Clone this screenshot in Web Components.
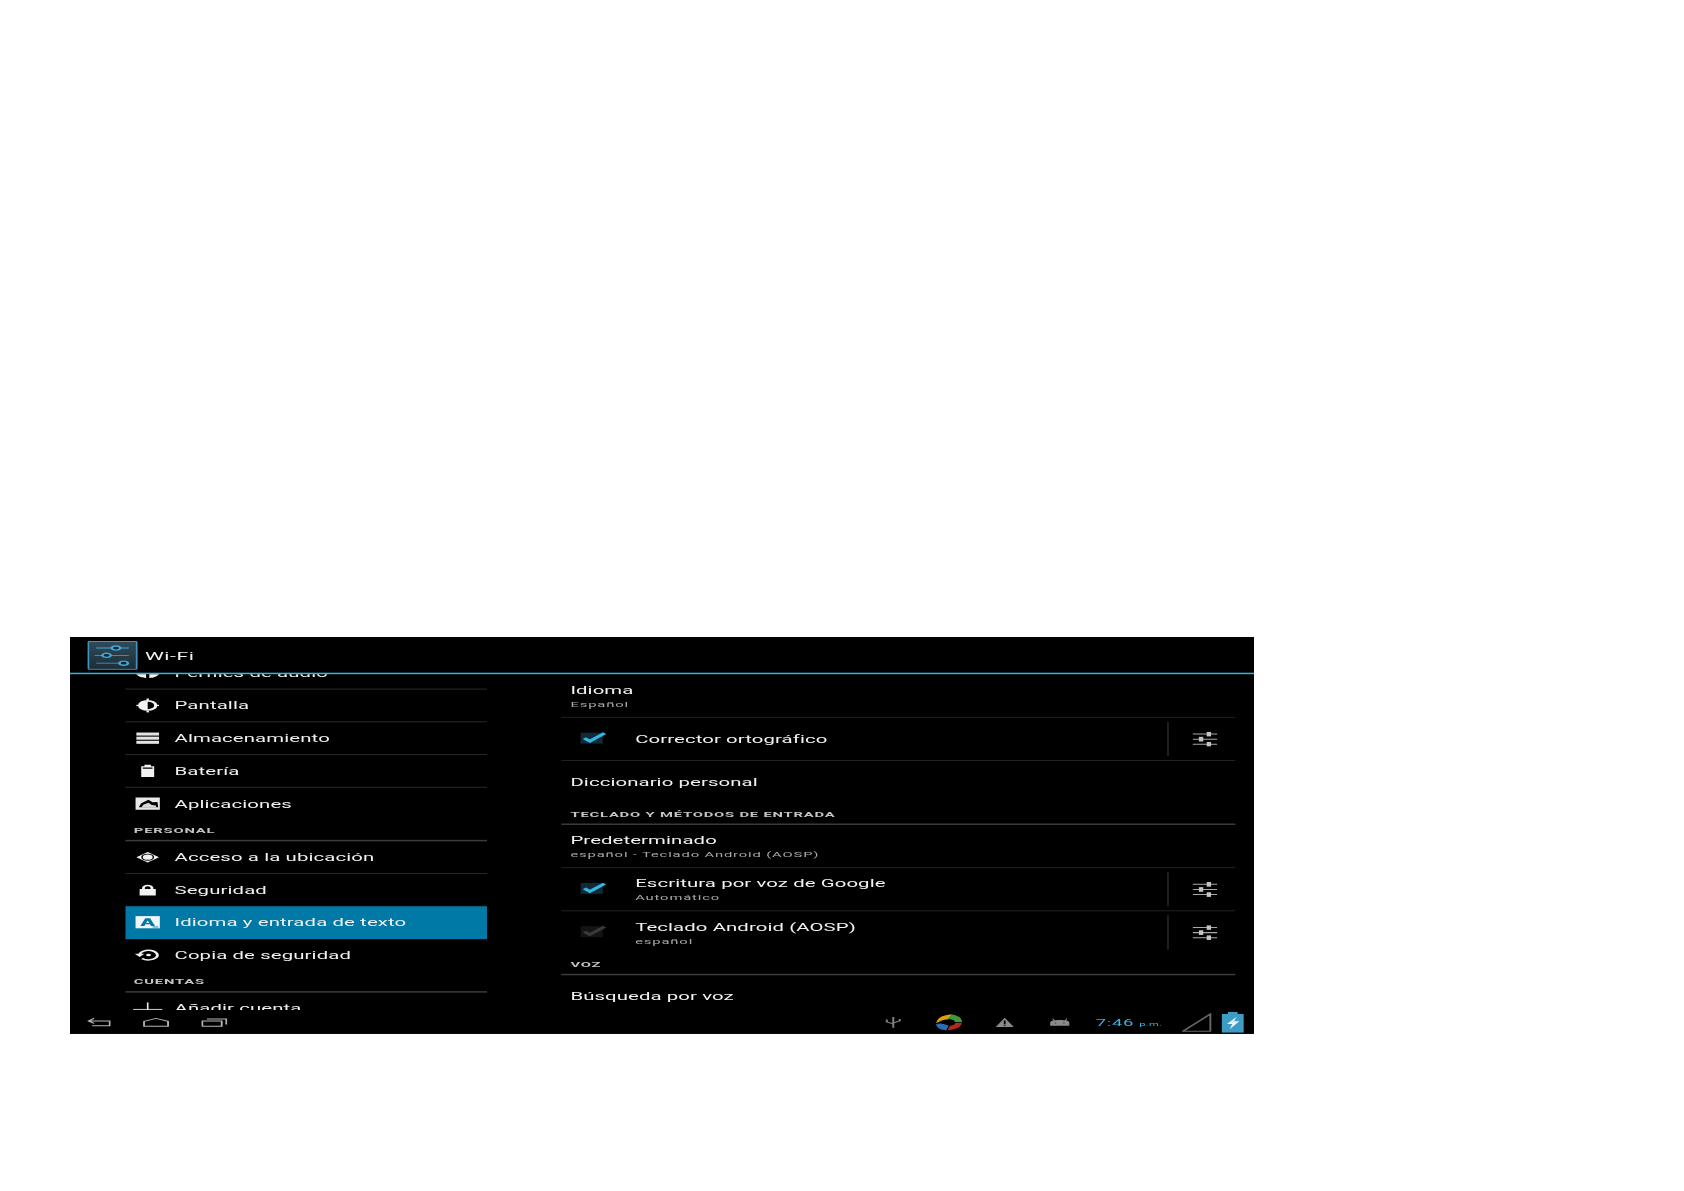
<!DOCTYPE html>
<html>
<head>
<meta charset="utf-8">
<title>Ajustes</title>
<style>
  html, body { margin: 0; background: #fff; }
  body { padding: 637px 0 0 70px; height: 554px; overflow: hidden; font-family: Roboto, "Liberation Sans", sans-serif; }
</style>
</head>
<body>
<tablet-screen>
  <action-bar slot="bar" label="Wi-Fi"></action-bar>

  <settings-list slot="left">
    <menu-row icon="audio" label="Perfiles de audio"></menu-row>
    <menu-row icon="display" label="Pantalla"></menu-row>
    <menu-row icon="storage" label="Almacenamiento"></menu-row>
    <menu-row icon="battery" label="Batería"></menu-row>
    <menu-row icon="apps" label="Aplicaciones" last></menu-row>
    <section-head label="PERSONAL" indent="9"></section-head>
    <menu-row icon="location" label="Acceso a la ubicación"></menu-row>
    <menu-row icon="lock" label="Seguridad"></menu-row>
    <menu-row icon="lang" label="Idioma y entrada de texto" selected></menu-row>
    <menu-row icon="backup" label="Copia de seguridad" last></menu-row>
    <section-head label="CUENTAS" indent="9"></section-head>
    <menu-row icon="plus" label="Añadir cuenta" last></menu-row>
  </settings-list>

  <pref-list slot="right">
    <pref-row label="Idioma" summary="Español"></pref-row>
    <pref-row label="Corrector ortográfico" check="on" tune></pref-row>
    <pref-row label="Diccionario personal" last></pref-row>
    <section-head label="TECLADO Y MÉTODOS DE ENTRADA" indent="10"></section-head>
    <pref-row label="Predeterminado" summary="español - Teclado Android (AOSP)"></pref-row>
    <pref-row label="Escritura por voz de Google" summary="Automático" check="on" tune></pref-row>
    <pref-row label="Teclado Android (AOSP)" summary="español" check="off" tune last></pref-row>
    <section-head label="VOZ" indent="10"></section-head>
    <pref-row label="Búsqueda por voz" last></pref-row>
  </pref-list>

  <status-bar slot="status"></status-bar>
</tablet-screen>

<script>
const ICONS = {
  audio: '<path fill="#f2f2f2" d="M14 0v28C7 28 1 22 1 14S7 0 14 0zM18 0c7 0 13 6 13 14s-6 14-13 14z"/>',
  display: '<g fill="#f2f2f2"><path d="M16 3.500a12 12.500 0 1 0 0 25 12 12.500 0 1 0 0-25zm0 4a8 8.500 0 0 1 0 17z" fill-rule="evenodd"/><rect x="14.500" y="0" width="3" height="4"/><rect x="14.500" y="28" width="3" height="4"/><rect x="2" y="14.500" width="3" height="3"/><rect x="27" y="14.500" width="3" height="3"/></g>',
  storage: '<g fill="#e4e4e4"><rect x="2" y="3" width="28" height="7"/><rect x="2" y="12.500" width="28" height="7"/><rect x="2" y="22" width="28" height="7"/></g>',
  battery: '<path fill="#f2f2f2" d="M12 2h8v3h4v25H8V5h4zM10 8v3h12V8z" fill-rule="evenodd"/>',
  apps: '<path fill="#e8e8e8" fill-rule="evenodd" d="M1 2h30v28H1zM5 24l3-9 9-8 5 6 6-1 1 12z"/><path fill="#d8d8d8" d="M8 25l3-7 6-4 4 5 5 1 1 5z"/>',
  location: '<g fill="#f2f2f2"><path fill-rule="evenodd" d="M16 4 30 16 16 28 2 16zm0 4a8 8 0 1 0 0 16 8 8 0 1 0 0-16z"/><circle cx="16" cy="16" r="6"/></g>',
  lock: '<path fill="#f2f2f2" fill-rule="evenodd" d="M6 14h3v-3a7 7 0 0 1 14 0v3h3v15H6zM12.500 14h7v-3a3.500 3.500 0 0 0-7 0z"/>',
  lang: '<rect x="1" y="2" width="30" height="28" fill="#eef6fa"/><path fill="#0079a6" fill-rule="evenodd" d="M13 7h6l6 18h-5l-1-4h-6l-1 4H7zm3 5-2 6h4z"/><rect x="22" y="26" width="7" height="2" fill="#0079a6"/>',
  backup: '<g fill="none" stroke="#f2f2f2" stroke-width="3.400"><path d="M6 16a11 11 0 1 1 3 8"/></g><path fill="#f2f2f2" d="M0 13h12L6 21z"/><circle cx="17" cy="16" r="3" fill="#f2f2f2"/>',
  plus: '<rect x="-2" y="17" width="36" height="2" fill="#eee"/><rect x="15" y="2" width="2" height="30" fill="#eee"/>'
};

class TabletScreen extends HTMLElement {
  constructor() {
    super();
    this.attachShadow({mode: 'open'}).innerHTML = `
      <style>
        :host { display: block; width: 1184px; height: 397px; overflow: hidden; }
        .screen {
          width: 1280px; height: 800px; background: #000; color: #f0f0f0;
          display: flex; flex-direction: column;
          transform: scale(.925, .496); transform-origin: 0 0;
          filter: blur(.55px);
        }
        .panes { flex: 1; min-height: 0; display: grid; grid-template-columns: 531px 729px; }
        .left { padding-left: 60px; overflow: hidden; width: 391px; }
        .right { overflow: hidden; padding-top: 1px; }
      </style>
      <div class="screen">
        <slot name="bar"></slot>
        <div class="panes">
          <div class="left"><slot name="left"></slot></div>
          <div class="right"><slot name="right"></slot></div>
        </div>
        <slot name="status"></slot>
      </div>`;
  }
}

class ActionBar extends HTMLElement {
  constructor() {
    super();
    this.attachShadow({mode: 'open'}).innerHTML = `
      <style>
        :host { display: flex; align-items: center; height: 75px; box-sizing: border-box; border-bottom: 3px solid #33b5e5; padding-left: 19px; gap: 8px; font-size: 23px; letter-spacing: .6px; }
        .logo { width: 54px; height: 58px; margin-top: 2px; box-sizing: border-box; border: 2px solid #3f93c0; border-radius: 2px; background: linear-gradient(#2f4a5a, #1f2d36); display: block; }
        span { padding-top: 4px; }
      </style>
      <svg class="logo" viewBox="0 0 54 58">
        <g stroke="#3fa9d8" stroke-width="2" fill="none">
          <path d="M8 13H46M6 29H46M8 46H46"/>
          <ellipse cx="31" cy="13" rx="5" ry="4.500" fill="#14242e" stroke-width="3"/>
          <ellipse cx="20" cy="29" rx="5" ry="4.500" fill="#14242e" stroke-width="3"/>
          <ellipse cx="40" cy="46" rx="5" ry="4.500" fill="#14242e" stroke-width="3"/>
        </g>
      </svg>
      <span>${this.getAttribute('label')}</span>`;
  }
}

class SettingsList extends HTMLElement {
  constructor() {
    super();
    this.attachShadow({mode: 'open'}).innerHTML = `
      <style>
        :host { display: block; margin-top: -35px; }
      </style>
      <slot></slot>`;
  }
}

class PrefList extends HTMLElement {
  constructor() {
    super();
    this.attachShadow({mode: 'open'}).innerHTML = `
      <style>
        :host { display: block; }
      </style>
      <slot></slot>`;
  }
}

class MenuRow extends HTMLElement {
  constructor() {
    super();
    const icon = ICONS[this.getAttribute('icon')] || '';
    this.attachShadow({mode: 'open'}).innerHTML = `
      <style>
        :host { display: flex; align-items: center; height: 66px; box-sizing: border-box; border-bottom: 2px solid #2a2a2a; font-size: 22px; letter-spacing: .12px; white-space: nowrap; }
        :host([last]) { border-bottom-color: transparent; }
        :host([selected]) { background: #0079a6; border-bottom-color: #0079a6; margin-top: -1px; }
        svg { width: 28px; height: 28px; margin-left: 10px; margin-right: 15px; flex: none; overflow: visible; }
        span { padding-top: 1px; }
      </style>
      <svg viewBox="0 0 32 32">${icon}</svg>
      <span>${this.getAttribute('label')}</span>`;
  }
}

class SectionHead extends HTMLElement {
  constructor() {
    super();
    this.attachShadow({mode: 'open'}).innerHTML = `
      <style>
        :host { display: flex; align-items: flex-end; height: 42px; box-sizing: border-box; border-bottom: 3px solid #3c3c3c; padding: 0 0 10px ${this.getAttribute('indent')}px; font-size: 16px; font-weight: 700; letter-spacing: .85px; color: #c4c4c4; white-space: nowrap; }
      </style>
      <span>${this.getAttribute('label')}</span>`;
  }
}

class PrefRow extends HTMLElement {
  constructor() {
    super();
    const check = this.getAttribute('check');
    const summary = this.getAttribute('summary');
    const box = check ? `
      <svg class="check ${check}" viewBox="0 0 32 32">
        <rect x="3" y="8" width="24" height="22" fill="${check === 'on' ? '#102a38' : '#141414'}"/>
        <path d="M7 19l6 6L29 9" fill="none" stroke="${check === 'on' ? '#33b5e5' : '#3a3a3a'}" stroke-width="5"/>
      </svg>` : '';
    const tune = this.hasAttribute('tune') ? `
      <div class="tune">
        <svg viewBox="0 0 32 32">
          <g stroke="#a8a8a8" stroke-width="2.200" fill="none">
            <path d="M2 5H30M2 16H30M2 27H30"/>
          </g>
          <g fill="#c4c4c4">
            <rect x="18" y="0" width="5" height="10"/>
            <rect x="9" y="11" width="5" height="10"/>
            <rect x="18" y="22" width="5" height="10"/>
          </g>
        </svg>
      </div>` : '';
    this.attachShadow({mode: 'open'}).innerHTML = `
      <style>
        :host { display: flex; align-items: center; height: 87px; box-sizing: border-box; border-bottom: 2px solid #222; white-space: nowrap; }
        :host([last]) { border-bottom-color: transparent; }
        .check { width: 32px; height: 32px; margin: 0 30px 10px 18px; flex: none; }
        .text { flex: 1; padding-left: ${check ? 0 : 10}px; padding-top: ${summary ? 4 : 0}px; }
        .title { font-size: 22px; line-height: 27px; letter-spacing: .1px; color: #f2f2f2; }
        .sub { font-size: 16px; line-height: 24px; margin-top: 3px; letter-spacing: .9px; color: #a8a8a8; }
        .tune { align-self: stretch; margin: 8px 0; width: 74px; border-left: 2px solid #222; display: flex; align-items: center; justify-content: center; box-sizing: border-box; padding-left: 6px; }
        .tune svg { width: 30px; height: 30px; }
      </style>
      ${box}
      <div class="text">
        <div class="title">${this.getAttribute('label')}</div>
        ${summary ? `<div class="sub">${summary}</div>` : ''}
      </div>
      ${tune}`;
  }
}

class StatusBar extends HTMLElement {
  constructor() {
    super();
    this.attachShadow({mode: 'open'}).innerHTML = `
      <style>
        :host { display: flex; align-items: center; height: 48px; padding: 0 11px 0 18px; color: #33b5e5; background: #000; }
        svg { display: block; flex: none; }
        .nav { display: flex; align-items: center; gap: 35px; margin-top: 2px; }
        .tray { margin-left: auto; margin-top: 2px; display: flex; align-items: center; }
        .clock { font-size: 20px; letter-spacing: .7px; white-space: nowrap; width: 93px; margin-left: 28px; }
        .clock small { font-size: 12px; letter-spacing: .3px; }
      </style>
      <div class="nav">
        <svg width="26" height="20" viewBox="0 0 26 20" fill="none" stroke="#b5b5b5" stroke-width="2"><path d="M8 2 2 7 8 12M2 7H25V17H6"/></svg>
        <svg width="28" height="20" viewBox="0 0 28 20" fill="none" stroke="#b5b5b5" stroke-width="2"><path d="M1 8 14 2 27 8V18H1z"/></svg>
        <svg width="28" height="20" viewBox="0 0 28 20" fill="none" stroke="#b5b5b5" stroke-width="2"><path d="M1 7H22V18H1zM6 3H27V14"/></svg>
      </div>
      <div class="tray">
        <svg width="18" height="24" viewBox="0 0 18 24"><g fill="none" stroke="#808080" stroke-width="2.200"><path d="M9 1V23M2 6v5l7 4M16 5v4l-7 4"/></g></svg>
        <svg width="30" height="34" viewBox="0 0 44 40" preserveAspectRatio="none" style="margin-left:36px"><path fill="#d8a013" d="M2 22C4 8 14 1 28 1L20 13C13 13 9 16 2 22z"/><path fill="#3f9a3c" d="M28 1C37 3 43 10 43 19L32 19C31 15 27 12 20 13z"/><path fill="#b5281f" d="M43 21C42 31 32 38 20 39L24 28C30 27 33 24 32 21z"/><path fill="#2a6db3" d="M2 24C9 20 16 24 22 28L18 39C9 38 2 33 2 24z"/></svg>
        <svg width="21" height="20" viewBox="0 0 32 26" preserveAspectRatio="none" style="margin-left:35px"><path fill-rule="evenodd" fill="#8a8a8a" d="M16 1 31 25H1zM14.500 8v9h3V8zM14.500 19v3h3v-3z"/></svg>
        <svg width="22" height="18" viewBox="0 0 34 26" preserveAspectRatio="none" style="margin-left:38px"><path fill="#8a8a8a" d="M1 23V14C1 8 7 6 17 6S33 8 33 14V23z"/><path stroke="#8a8a8a" stroke-width="2" d="M8 8 5 2M26 8l3-6"/><circle cx="10" cy="15" r="1.500" fill="#333"/><circle cx="24" cy="15" r="1.500" fill="#333"/></svg>
        <span class="clock">7:46 <small>p.m.</small></span>
        <svg width="32" height="38" viewBox="0 0 32 38"><path d="M1 37 31 2V37z" fill="none" stroke="#666" stroke-width="2.500"/></svg>
        <svg width="24" height="42" viewBox="0 0 25 40" preserveAspectRatio="none" style="margin-left:11px"><path fill="#3e9cc4" d="M7 0h11v4h7v36H0V4h7z"/><path fill="#e4f3f9" d="M17 9 6 23h6l-3 10 11-15h-6z"/></svg>
      </div>`;
  }
}

customElements.define('tablet-screen', TabletScreen);
customElements.define('action-bar', ActionBar);
customElements.define('settings-list', SettingsList);
customElements.define('pref-list', PrefList);
customElements.define('menu-row', MenuRow);
customElements.define('section-head', SectionHead);
customElements.define('pref-row', PrefRow);
customElements.define('status-bar', StatusBar);
</script>
</body>
</html>
